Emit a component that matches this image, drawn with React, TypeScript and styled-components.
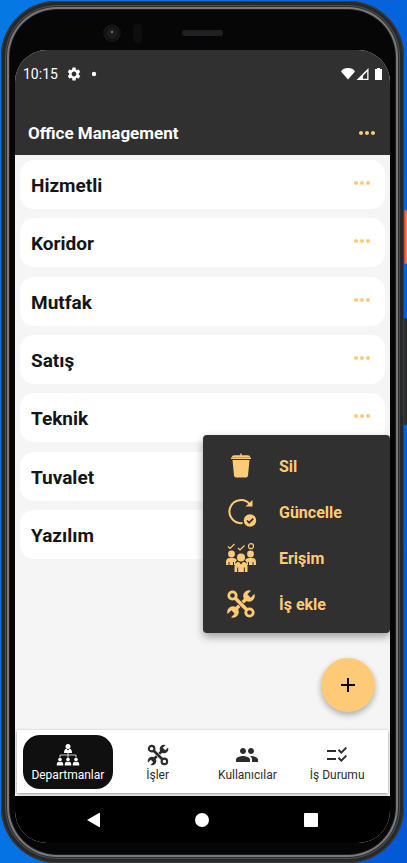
import React from 'react';
import styled, { createGlobalStyle, css } from 'styled-components';
import {
  MdChecklistRtl,
  MdMoreHoriz,
  MdPeople,
  MdSettings,
} from 'react-icons/md';

const amber = '#ffca78';
const charcoal = '#303030';

const GlobalStyle = createGlobalStyle`
  * { box-sizing: border-box; }
  body {
    margin: 0;
    font-family: Roboto, "Noto Sans", sans-serif;
  }
  button {
    border: 0;
    padding: 0;
    background: none;
    font: inherit;
    color: inherit;
    cursor: pointer;
  }
  svg { display: block; }
`;

const Desktop = styled.div`
  min-height: 100vh;
  display: flex;
  padding: 1px 3px 0 1px;
  background: linear-gradient(100deg, #0678e4 0%, #0673e4 30%, #0458d6 100%);
`;

const Phone = styled.div`
  position: relative;
  flex: 1;
  display: flex;
  flex-direction: column;
  padding: 0 14px 20px 14px;
  border-radius: 56px;
  background: #060607;
  box-shadow:
    inset 0 0 0 1px #3b3d3e,
    inset 0 0 0 4px #26282a,
    inset 0 0 0 5px #4a4d4f,
    inset 0 0 0 6px #2c2e30,
    inset 0 0 0 8px #77797b,
    inset 0 0 0 9px #1c1d1e;
`;

const SideButton = styled.span<{ $kind: 'power' | 'volume' }>`
  position: absolute;
  right: -3px;
  width: 3px;
  ${({ $kind }) =>
    $kind === 'power'
      ? css`
          top: 209px;
          height: 54px;
          background: linear-gradient(90deg, #c8452c, #f58a6c);
        `
      : css`
          top: 317px;
          height: 107px;
          background: #2b2d2f;
        `}
  border-radius: 0 2px 2px 0;
`;

const Bezel = styled.div`
  height: 49px;
  flex: none;
  display: flex;
  align-items: center;
  padding: 20px 0 0 88px;
`;

const Screen = styled.div`
  position: relative;
  flex: 1;
  display: flex;
  flex-direction: column;
  overflow: hidden;
  border-radius: 32px;
  background: #f5f5f5;
`;

const StatusBar = styled.div`
  display: flex;
  align-items: center;
  height: 48px;
  padding: 0 7px 0 8px;
  color: #fff;
  background: ${charcoal};
  font-size: 14px;
`;

const StatusGroup = styled.div<{ $end?: boolean }>`
  display: flex;
  align-items: center;
  gap: ${({ $end }) => ($end ? '0' : '8px')};
  margin-left: ${({ $end }) => ($end ? 'auto' : '0')};
`;

const AppBar = styled.header`
  display: flex;
  align-items: center;
  justify-content: space-between;
  height: 57px;
  padding: 12px 11px 0 13px;
  background: ${charcoal};
`;

const Title = styled.h1`
  margin: 0;
  color: #fff;
  font-size: 17px;
  line-height: 24px;
  font-weight: 700;
`;

const MoreButton = styled.button`
  color: ${amber};
  font-size: 24px;
`;

const Content = styled.main`
  position: relative;
  flex: 1;
  padding: 5px;
`;

const DepartmentList = styled.ul`
  display: flex;
  flex-direction: column;
  justify-content: space-between;
  min-height: 399px;
  margin: 0;
  padding: 0;
  list-style: none;
`;

const DepartmentCard = styled.li`
  display: flex;
  align-items: center;
  justify-content: space-between;
  height: 49px;
  padding: 2px 11px 0;
  border-radius: 14px;
  background: #fff;
  color: #151515;
  font-size: 19px;
  font-weight: 700;

  ${MoreButton} {
    padding-bottom: 5px;
  }
`;

const Menu = styled.div`
  position: absolute;
  top: 280px;
  right: 0;
  width: 187px;
  padding: 8px 0 6px;
  border-radius: 4px;
  background: ${charcoal};
  box-shadow: 0 4px 8px rgba(0, 0, 0, 0.35);
`;

const MenuItem = styled.button`
  display: flex;
  align-items: center;
  gap: 22px;
  width: 100%;
  height: 46px;
  padding-left: 22px;
  color: ${amber};
  font-size: 16px;
  font-weight: 700;
`;

const Fab = styled.button`
  position: absolute;
  right: 15px;
  bottom: 18px;
  display: grid;
  place-items: center;
  width: 54px;
  height: 54px;
  border-radius: 50%;
  background: ${amber};
  color: #000;
  box-shadow: 0 3px 6px rgba(0, 0, 0, 0.3);
`;

const TabBar = styled.nav`
  display: flex;
  margin: 0 2px 3px;
  padding: 5px 6px 4px;
  background: #fff;
  box-shadow: 0 1px 3px rgba(0, 0, 0, 0.4);
`;

const Tab = styled.button<{ $active?: boolean }>`
  flex: 1;
  display: flex;
  flex-direction: column;
  align-items: center;
  height: 54px;
  padding-top: 8px;
  border-radius: 17px;
  font-size: 12px;
  line-height: 16px;
  white-space: nowrap;
  color: ${({ $active }) => ($active ? '#fff' : '#2c2c2c')};
  background: ${({ $active }) => ($active ? '#101010' : 'transparent')};
`;

const TabIcon = styled.span`
  display: grid;
  place-items: center;
  height: 24px;
  font-size: 24px;
`;

const SystemNav = styled.div`
  display: flex;
  justify-content: space-around;
  align-items: center;
  height: 47px;
  padding: 0 25px;
  background: #000;
  color: #fff;
`;

const CameraRow = () => (
  <svg width="124" height="24" viewBox="0 0 124 24" aria-hidden="true">
    <circle cx="9" cy="9" r="9" fill="#141416" />
    <circle cx="9" cy="9" r="5" fill="#1d1e22" />
    <circle cx="9" cy="8" r="1" fill="#888" />
    <rect x="30" y="0" width="9" height="19" rx="4" fill="#0e0e10" />
    <rect x="79" y="6" width="41" height="6" rx="3" fill="#202023" />
  </svg>
);

const StatusIcons = () => (
  <svg width="42" height="14" viewBox="0 0 42 14" fill="#fff" aria-hidden="true">
    <path d="M0 4.500C1.500 1.500 4 1 7 1s5.500.5 7 3.500L7 12.500Z" />
    <path fillRule="evenodd" d="M27.500 1V13H15.500ZM26.200 4.500L22 9V11.700H26.200Z" />
    <path d="M36 1h3v1h2v11h-7V2h2Z" />
  </svg>
);

const TrashIcon = () => (
  <svg width="32" height="32" viewBox="0 0 32 32" fill="currentColor">
    <path d="M15.300 3.500h1.400v1.700h6q2.500 0 2.500 2H6.800q0-2 2.500-2h6ZM6 7.500h20v1.600H6ZM7.500 10h17L23 25.500q-.2 2-2 2H11q-1.800 0-2-2Z" />
  </svg>
);

const UpdateIcon = () => (
  <svg width="32" height="32" viewBox="0 0 32 32" fill="none" stroke="currentColor">
    <path d="M25 8.500A11.500 11.500 0 1 0 17.500 27" strokeWidth="2" />
    <path d="M27.500 4v6.500H20.500Z" fill="currentColor" stroke="none" />
    <circle cx="25" cy="24.500" r="6.200" fill="currentColor" stroke="none" />
    <path d="m22 24.500 2.200 2.200 4-4" stroke={charcoal} strokeWidth="1.700" />
  </svg>
);

const AccessIcon = () => (
  <svg width="32" height="32" viewBox="0 0 32 32" fill="currentColor">
    <g fill="none" stroke="currentColor" strokeWidth="1.200">
      <path d="m3 4.500 2 2L9.500 2M13 6l2 2 4.500-4.500" />
      <circle cx="26" cy="4.200" r="2.500" />
    </g>
    <circle cx="6.500" cy="12" r="3.400" />
    <circle cx="25.500" cy="12" r="3.400" />
    <path d="M1 23v-3q0-4 4-4h3q2.500 0 4 2-2 1.500-2 5H9v-3H8v3H4.500v-3h-1v3ZM31 23v-3q0-4-4-4h-3q-2.500 0-4 2 2 1.500 2 5h1v-3h1v3h3.500v-3h1v3Z" />
    <circle cx="16" cy="15.500" r="4" />
    <path d="M9.500 30v-5q0-5 4.500-5l2 2.500 2-2.500q4.500 0 4.500 5v5h-2.700v-4.500h-1V30h-5.600v-4.500h-1V30Z" />
  </svg>
);

const ToolsIcon = ({ size, hole }: { size: number; hole: string }) => (
  <svg width={size} height={size} viewBox="0 0 32 32" fill="currentColor" stroke="none">
    <path d="M9 23 23 9" stroke="currentColor" strokeWidth="3.400" />
    <circle cx="24" cy="8" r="5.800" />
    <circle cx="8" cy="24" r="5.800" />
    <path d="m24 8 7-7M8 24l-7 7" stroke={hole} strokeWidth="4.600" />
    <path d="m8 8 16 16" stroke={hole} strokeWidth="4.800" />
    <path d="m8 8 16 16" stroke="currentColor" strokeWidth="3.600" />
    <circle cx="7.500" cy="7.500" r="3.700" fill={hole} stroke="currentColor" strokeWidth="2.800" />
    <circle cx="24.500" cy="24.500" r="3.700" fill={hole} stroke="currentColor" strokeWidth="2.800" />
  </svg>
);

const OrgIcon = () => (
  <svg width="24" height="24" viewBox="0 0 24 24" fill="currentColor">
    <circle cx="12" cy="3.500" r="2.500" />
    <path d="M8 10q0-4 2.500-4.200L12 7.500l1.500-1.700Q16 6 16 10Z" />
    <path d="M12 10v5M4 14.500v-2.500h16v2.500" fill="none" stroke="currentColor" strokeWidth=".8" />
    {[4, 12, 20].map((x) => (
      <g key={x}>
        <circle cx={x} cy="16.500" r="1.800" />
        <path d={`M${x - 3.300} 22.500q0-4 2.300-4l1 1 1-1q2.300 0 2.300 4Z`} />
      </g>
    ))}
  </svg>
);

const departments = ['Hizmetli', 'Koridor', 'Mutfak', 'Satış', 'Teknik', 'Tuvalet', 'Yazılım'];

const actions = [
  { label: 'Sil', icon: <TrashIcon /> },
  { label: 'Güncelle', icon: <UpdateIcon /> },
  { label: 'Erişim', icon: <AccessIcon /> },
  { label: 'İş ekle', icon: <ToolsIcon size={32} hole={charcoal} /> },
];

const tabs = [
  { label: 'Departmanlar', icon: <OrgIcon /> },
  { label: 'İşler', icon: <ToolsIcon size={24} hole="#fff" /> },
  { label: 'Kullanıcılar', icon: <MdPeople /> },
  { label: 'İş Durumu', icon: <MdChecklistRtl /> },
];

export default function App() {
  return (
    <>
      <GlobalStyle />
      <Desktop>
        <Phone>
          <SideButton $kind="power" />
          <SideButton $kind="volume" />
          <Bezel>
            <CameraRow />
          </Bezel>
          <Screen>
            <StatusBar>
              <StatusGroup>
                <span>10:15</span>
                <MdSettings size={16} />
                <svg width="8" height="6" viewBox="0 0 8 6" aria-hidden="true">
                  <circle cx="4" cy="3" r="2.200" fill="#fff" />
                </svg>
              </StatusGroup>
              <StatusGroup $end>
                <StatusIcons />
              </StatusGroup>
            </StatusBar>
            <AppBar>
              <Title>Office Management</Title>
              <MoreButton aria-label="Menu">
                <MdMoreHoriz />
              </MoreButton>
            </AppBar>
            <Content>
              <DepartmentList>
                {departments.map((name) => (
                  <DepartmentCard key={name}>
                    {name}
                    <MoreButton aria-label={name}>
                      <MdMoreHoriz />
                    </MoreButton>
                  </DepartmentCard>
                ))}
              </DepartmentList>
              <Menu role="menu">
                {actions.map(({ label, icon }) => (
                  <MenuItem key={label} role="menuitem">
                    {icon}
                    {label}
                  </MenuItem>
                ))}
              </Menu>
              <Fab aria-label="Ekle">
                <svg width="16" height="16" viewBox="0 0 16 16" stroke="currentColor" strokeWidth="2">
                  <path d="M8 1v14M1 8h14" />
                </svg>
              </Fab>
            </Content>
            <TabBar>
              {tabs.map(({ label, icon }, index) => (
                <Tab key={label} $active={index === 0}>
                  <TabIcon>{icon}</TabIcon>
                  {label}
                </Tab>
              ))}
            </TabBar>
            <SystemNav>
              <button aria-label="Back">
                <svg width="16" height="16" viewBox="0 0 16 16" fill="currentColor">
                  <path d="M1 8 13 1q1-.5 1 .5v13q0 1-1 .5Z" />
                </svg>
              </button>
              <button aria-label="Home">
                <svg width="16" height="16" viewBox="0 0 16 16" fill="currentColor">
                  <circle cx="8" cy="8" r="7" />
                </svg>
              </button>
              <button aria-label="Recent apps">
                <svg width="16" height="16" viewBox="0 0 16 16" fill="currentColor">
                  <rect x="1" y="1" width="14" height="14" rx="1" />
                </svg>
              </button>
            </SystemNav>
          </Screen>
        </Phone>
      </Desktop>
    </>
  );
}
